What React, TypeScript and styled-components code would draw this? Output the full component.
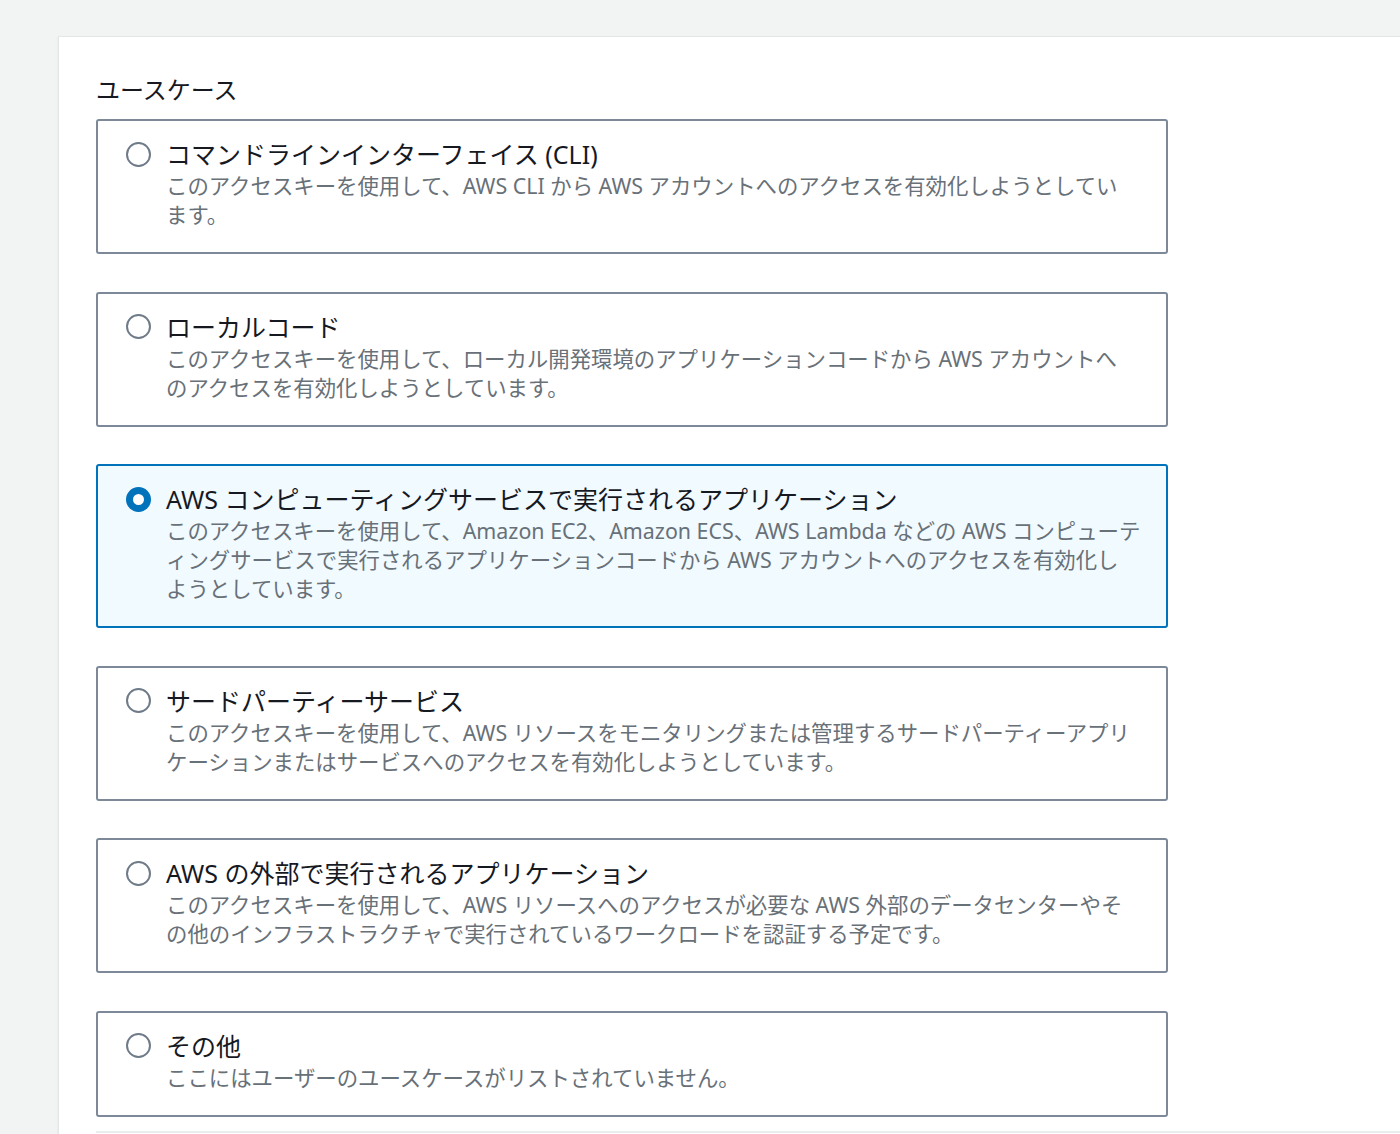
import styled, { createGlobalStyle } from "styled-components";
import { useState } from "react";

const GlobalStyle = createGlobalStyle`
  html, body {
    margin: 0;
    padding: 0;
    background: #f2f3f3;
    overflow: hidden;
  }
  body {
    font-family: "Noto Sans", "Noto Sans CJK JP", sans-serif;
    -webkit-font-smoothing: antialiased;
  }
`;

const Page = styled.div`
  padding: 37px 0 0 59px;
  min-height: 1134px;
  box-sizing: border-box;
`;

const Panel = styled.section`
  background: #ffffff;
  width: 1341px;
  min-height: 1100px;
  box-sizing: border-box;
  padding: 37px 0 0 37px;
  box-shadow: 0 0 0 1px #e4e7e8, -1px 0 2px rgba(0, 0, 0, 0.08);
`;

const Heading = styled.h2`
  margin: 0 0 13px;
  font-size: 24px;
  line-height: 32px;
  font-weight: 400;
  color: #16191f;
`;

const Options = styled.div`
  display: flex;
  flex-direction: column;
  gap: 37.5px;
  width: 1072px;
`;

const Card = styled.label<{ $selected: boolean }>`
  display: flex;
  gap: 15px;
  padding: 16px 16px 23px 28px;
  border: 2px solid ${(p) => (p.$selected ? "#0073bb" : "#7d8998")};
  background: ${(p) => (p.$selected ? "#f1faff" : "#ffffff")};
  border-radius: 3px;
  cursor: pointer;
`;

const RadioSlot = styled.span`
  flex: none;
  height: 34px;
  display: flex;
  align-items: center;
`;

const Radio = styled.span<{ $selected: boolean }>`
  width: 25px;
  height: 25px;
  box-sizing: border-box;
  border-radius: 50%;
  background: #ffffff;
  border: ${(p) => (p.$selected ? "7.5px solid #0073bb" : "2.5px solid #6f7b88")};
`;

const Body = styled.span`
  display: flex;
  flex-direction: column;
  min-width: 0;
`;

const Title = styled.span`
  font-size: 25px;
  line-height: 34px;
  color: #16191f;
`;

// line breaks follow the original layout's wrap points
const Description = styled.span`
  font-size: 21.4px;
  line-height: 29px;
  color: #687078;
  white-space: pre-line;
`;

const Divider = styled.div`
  margin-top: 14px;
  border-top: 2px solid #eaeded;
`;

const options = [
  {
    id: "cli",
    title: "コマンドラインインターフェイス (CLI)",
    description:
      "このアクセスキーを使用して、AWS CLI から AWS アカウントへのアクセスを有効化しようとしてい\nます。",
  },
  {
    id: "local",
    title: "ローカルコード",
    description:
      "このアクセスキーを使用して、ローカル開発環境のアプリケーションコードから AWS アカウントへ\nのアクセスを有効化しようとしています。",
  },
  {
    id: "compute",
    title: "AWS コンピューティングサービスで実行されるアプリケーション",
    description:
      "このアクセスキーを使用して、Amazon EC2、Amazon ECS、AWS Lambda などの AWS コンピューテ\nィングサービスで実行されるアプリケーションコードから AWS アカウントへのアクセスを有効化し\nようとしています。",
  },
  {
    id: "third",
    title: "サードパーティーサービス",
    description:
      "このアクセスキーを使用して、AWS リソースをモニタリングまたは管理するサードパーティーアプリ\nケーションまたはサービスへのアクセスを有効化しようとしています。",
  },
  {
    id: "outside",
    title: "AWS の外部で実行されるアプリケーション",
    description:
      "このアクセスキーを使用して、AWS リソースへのアクセスが必要な AWS 外部のデータセンターやそ\nの他のインフラストラクチャで実行されているワークロードを認証する予定です。",
  },
  {
    id: "other",
    title: "その他",
    description: "ここにはユーザーのユースケースがリストされていません。",
  },
];

function App() {
  const [value, setValue] = useState("compute");
  return (
    <>
      <GlobalStyle />
      <Page>
        <Panel>
          <Heading>ユースケース</Heading>
          <Options role="radiogroup">
            {options.map((o) => (
              <Card
                key={o.id}
                $selected={value === o.id}
                onClick={() => setValue(o.id)}
              >
                <RadioSlot>
                  <Radio $selected={value === o.id} />
                </RadioSlot>
                <Body>
                  <Title>{o.title}</Title>
                  <Description>{o.description}</Description>
                </Body>
              </Card>
            ))}
          </Options>
          <Divider />
        </Panel>
      </Page>
    </>
  );
}
export default App;
